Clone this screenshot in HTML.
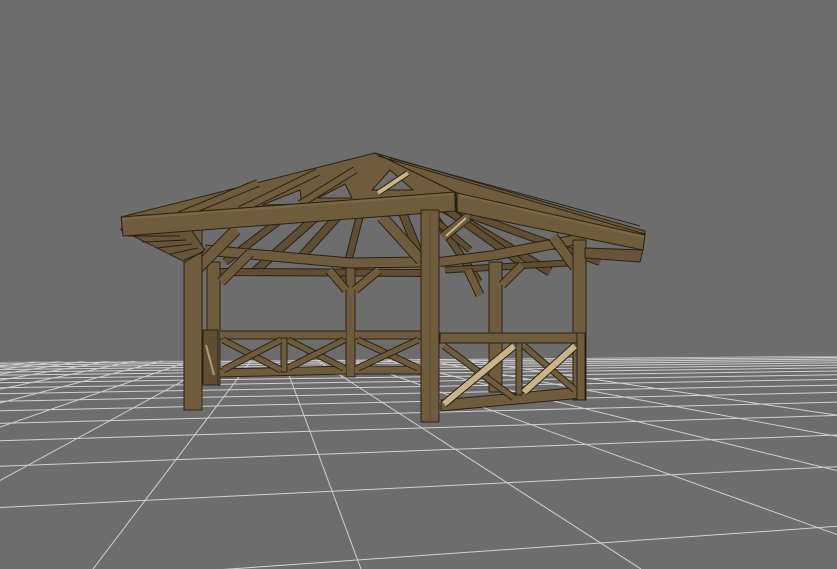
<!DOCTYPE html>
<html><head><meta charset="utf-8">
<style>
html,body{margin:0;padding:0;background:#6d6d6d;}
svg{display:block;}
</style></head>
<body>
<svg id="s" width="837" height="569" viewBox="0 0 837 569" xmlns="http://www.w3.org/2000/svg">
<rect width="837" height="569" fill="#6d6d6d"/>
<defs><clipPath id="gc"><polygon points="0,362 300,360 837,356 837,569 0,569"/></clipPath></defs>
<g id="grid" clip-path="url(#gc)" stroke="#d0d0d0" stroke-width="1" fill="none"></g>
<g id="wood" stroke-linejoin="round"></g>
</svg>
<script>
var NS="http://www.w3.org/2000/svg";
var grid=document.getElementById('grid'),wood=document.getElementById('wood');
function L(g,x1,y1,x2,y2,st,w,cap){var e=document.createElementNS(NS,'line');e.setAttribute('x1',x1);e.setAttribute('y1',y1);e.setAttribute('x2',x2);e.setAttribute('y2',y2);e.setAttribute('stroke',st);e.setAttribute('stroke-width',w);if(cap)e.setAttribute('stroke-linecap',cap);g.appendChild(e);}
var vx=273,vy=332;
for(var j=-8;j<=6;j++){var xb=93+262*j+6*j*j;var t=(569-vy);var x1=vx+(xb-vx)*(20/t),y1=vy+20;L(grid,x1,y1,xb,569,'#d0d0d0',1);}
var wx=3600;
for(var k=-1;k<=17;k++){var d=1/(0.0057+0.00175*k);var y0=vy+d;var y1=y0+(vy-y0)*(837/wx);L(grid,0,y0,837,y1,'#d0d0d0',1);}
var W='#6f5c3c',WD='#5f4e33',WL='#7b6845',HL='#c9b489',OL='#2a2113';
function B(x1,y1,x2,y2,w,c){L(wood,x1,y1,x2,y2,OL,w+2);L(wood,x1,y1,x2,y2,c||W,w);}
function P(pts,c,sw){var e=document.createElementNS(NS,'polygon');e.setAttribute('points',pts);e.setAttribute('fill',c||W);e.setAttribute('stroke',OL);e.setAttribute('stroke-width',sw||1);wood.appendChild(e);}
function R(x,y,w,h,c){P(x+','+y+' '+(x+w)+','+y+' '+(x+w)+','+(y+h)+' '+x+','+(y+h),c);}
B(375,165,254,272,7,WD);B(380,170,300,258,7,WD);B(372,168,343,282,6,WD);B(385,170,421,258,7,WD);
B(420,195,479,282,6,WD);B(430,200,550,272,7,WD);B(440,205,520,262,6,WD);B(400,190,470,250,5,WD);
B(470,215,600,262,6,WD);B(300,205,225,262,6,WD);
B(220,272,421,273,6,WD);B(445,270,585,262,5,WD);
R(207,262,13,123);R(346,262,9,115);R(489,262,13,130);
B(205,250,350,263,9);B(350,263,421,262,9);B(440,262,495,255,8);B(495,255,585,238,9);
B(196,270,236,230,10);B(221,282,250,253,8);B(329,270,346,290,7);B(355,290,379,270,7);
B(421,260,382,217,10);B(443,237,468,217,8,W);L(wood,446,236,466,218,HL,2);
B(480,295,468,270,7);B(502,285,522,265,7);B(575,267,553,237,9);
B(220,335,346,335,7);B(355,335,421,335,7);
B(220,373,346,370,7);B(355,370,421,370,7);
R(281,338,6,34);
B(223,340,281,370,5);B(223,370,281,340,5);B(288,340,344,368,5);B(288,368,344,340,5);
B(358,340,418,368,5);B(358,368,418,340,5);
R(203,330,15,55,WD);L(wood,206,345,214,375,'#b09a6a',2);
R(573,240,13,160);
R(184,230,18,180);
P('121,230 185,262 205,250 190,228 123,222','#66553a');
for(var i=0;i<5;i++){L(wood,128+i*14,236+i*6,180+i*6,236+i*4,OL,1);}
P('121,217 375,153 457,193 123,219');
P('372,190 390,170 413,190','#6d6d6d');P('318,198 345,184 352,198','#6d6d6d');P('262,205 300,190 302,204','#6d6d6d');
B(378,193,408,173,4,HL);B(300,204,355,170,6);B(240,210,318,172,6);B(180,215,258,183,6);
P('375,153 645,231 645,236 457,193');
L(wood,378,156,645,234,OL,1);L(wood,390,158,640,226,OL,1);
P('121,217 455,192 455,211 123,236');L(wood,122,219,455,194,WL,2);
P('457,193 645,235 643,250 457,212');L(wood,459,195,644,237,WL,2);
L(wood,455,192,457,212,OL,2);
P('585,248 643,250 640,262 585,258','#66553a');
P('440,333 583,333 583,343 440,343');
P('441,400 582,387 582,398 441,411');
R(516,343,6,52);R(577,333,8,67);
B(444,346,514,398,5);B(444,404,514,346,6,HL);
B(524,346,575,390,5);B(524,392,575,346,6,HL);
R(421,210,18,212);
L(wood,430,212,430,420,WD,1);
</script>
</body></html>
